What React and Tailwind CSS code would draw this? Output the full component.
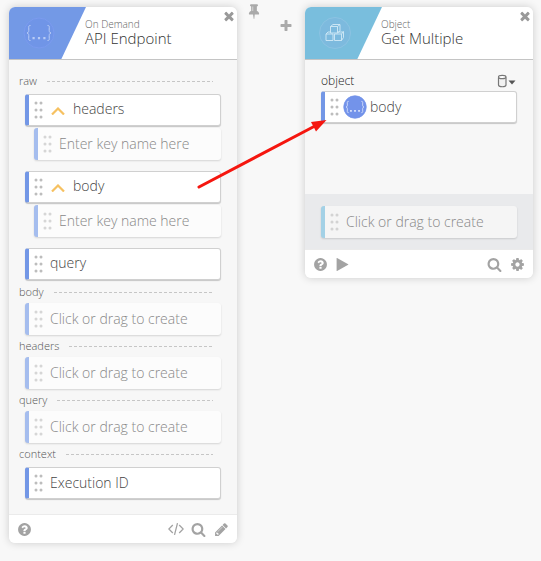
import React from "react";

const PATHS = {
  times:
    "M1490 1322q0 40-28 68l-136 136q-28 28-68 28t-68-28l-294-294-294 294q-28 28-68 28t-68-28l-136-136q-28-28-28-68t28-68l294-294-294-294q-28-28-28-68t28-68l136-136q28-28 68-28t68 28l294 294 294-294q28-28 68-28t68 28l136 136q28 28 28 68t-28 68l-294 294 294 294q28 28 28 68z",
  plus:
    "M1600 736v192q0 40-28 68t-68 28h-416v416q0 40-28 68t-68 28h-192q-40 0-68-28t-28-68v-416h-416q-40 0-68-28t-28-68v-192q0-40 28-68t68-28h416v-416q0-40 28-68t68-28h192q40 0 68 28t28 68v416h416q40 0 68 28t28 68z",
  pin:
    "M800 864v-448q0-14-9-23t-23-9-23 9-9 23v448q0 14 9 23t23 9 23-9 9-23zm672 352q0 26-19 45t-45 19h-429l-51 483q-2 12-10.5 20.5t-20.5 8.5h-1q-27 0-32-27l-76-485h-404q-26 0-45-19t-19-45q0-123 78.5-221.5t177.5-98.5v-512q-52 0-90-38t-38-90 38-90 90-38h640q52 0 90 38t38 90-38 90-90 38v512q99 0 177.5 98.5t78.5 221.5z",
  help:
    "M1024 1376v-192q0-14-9-23t-23-9h-192q-14 0-23 9t-9 23v192q0 14 9 23t23 9h192q14 0 23-9t9-23zm256-672q0-88-55.5-163t-138.5-116-170-41q-243 0-371 213-15 24 8 42l132 100q7 6 19 6 16 0 25-12 53-68 86-92 34-24 86-24 48 0 85.5 26t37.5 59q0 38-20 61t-68 45q-63 28-115.5 86.5t-52.5 125.5v36q0 14 9 23t23 9h192q14 0 23-9t9-23q0-19 21.5-49.5t54.5-49.5q32-18 49-28.5t46-35 44.5-48 28-60.5 12.5-81zm384 192q0 209-103 385.5t-279.5 279.5-385.5 103-385.5-103-279.5-279.5-103-385.5 103-385.5 279.5-279.5 385.5-103 385.5 103 279.5 279.5 103 385.5z",
  search:
    "M1216 832q0-185-131.5-316.500t-316.500-131.500-316.500 131.500-131.500 316.500 131.500 316.500 316.500 131.500 316.500-131.500 131.500-316.500zm512 832q0 52-38 90t-90 38q-54 0-90-38l-343-342q-179 124-399 124-143 0-273.500-55.500t-225-150-150-225-55.500-273.500 55.500-273.500 150-225 225-150 273.500-55.500 273.500 55.500 225 150 150 225 55.500 273.500q0 220-124 399l343 343q37 37 37 90z",
  cog:
    "M1152 896q0-106-75-181t-181-75-181 75-75 181 75 181 181 75 181-75 75-181zm512-109v222q0 12-8 23t-20 13l-185 28q-19 54-39 91 35 50 107 138 10 12 10 25t-9 23q-27 37-99 108t-94 71q-12 0-26-9l-138-108q-44 23-91 38-16 136-29 186-7 28-36 28h-222q-14 0-24.500-8.500t-11.500-21.500l-28-184q-49-16-90-37l-141 107q-10 9-25 9-14 0-25-11-126-114-165-168-7-10-7-23 0-12 8-23 15-21 51-66.500t54-70.500q-27-50-41-99l-183-27q-13-2-21-12.500t-8-23.500v-222q0-12 8-23t19-13l186-28q14-46 39-92-40-57-107-138-10-12-10-24 0-10 9-23 26-36 98.500-107.500t94.500-71.500q13 0 26 10l138 107q44-23 91-38 16-136 29-186 7-28 36-28h222q14 0 24.500 8.500t11.500 21.500l28 184q49 16 90 37l142-107q9-9 24-9 13 0 25 10 129 119 165 170 7 8 7 22 0 12-8 23-15 21-51 66.500t-54 70.500q26 50 41 98l183 28q13 2 21 12.500t8 23.500z",
  pencil:
    "M491 1536l91-91-235-235-91 91v107h128v128h107zm523-928q0-22-22-22-10 0-17 7l-542 542q-7 7-7 17 0 22 22 22 10 0 17-7l542-542q7-7 7-17zm-54-192l416 416-832 832h-416v-416zm683 96q0 53-37 90l-166 166-416-416 166-165q36-38 90-38 53 0 91 38l235 234q37 39 37 91z",
  play:
    "M1576 927l-1328 738q-23 13-39.500 3t-16.500-36v-1472q0-26 16.500-36t39.500 3l1328 738q23 13 23 31t-23 31z",
};

function Icon({ name, className = "size-[15px]" }) {
  return (
    <svg viewBox="0 0 1792 1792" fill="currentColor" className={`shrink-0 ${className}`} aria-hidden="true">
      <path d={PATHS[name]} />
    </svg>
  );
}

function CodeIcon() {
  return (
    <svg viewBox="0 0 16 16" fill="none" stroke="currentColor" strokeWidth="1.3" className="size-4 shrink-0" aria-hidden="true">
      <path d="M4.800 4 .8 8l4 4M11.200 4l4 4-4 4M9.500 2.200l-3 11.600" />
    </svg>
  );
}

function Braces({ className, fill, stroke, brace }) {
  return (
    <svg viewBox="0 0 32 32" fill="none" className={`shrink-0 ${className}`} aria-hidden="true">
      <circle cx="16" cy="16" r="15" fill={fill} stroke={stroke} />
      <path
        d="M7.500 8.500C5 8.500 5.800 10 5.800 12c0 2 .2 3.500-1.800 4 2 .5 1.800 2 1.800 4 0 2-.8 3.500 1.700 3.500M24.500 8.500c2.500 0 1.700 1.500 1.700 3.500 0 2-.2 3.500 1.800 4-2 .5-1.800 2-1.800 4 0 2 .8 3.500-1.700 3.500"
        stroke={brace}
        strokeWidth="1"
      />
      <path d="M9.500 20h2.200v2.200H9.500zM14.900 20h2.200v2.200h-2.200zM20.300 20h2.200v2.200h-2.200z" fill={brace} />
    </svg>
  );
}

function Cubes() {
  return (
    <svg viewBox="0 0 32 32" fill="none" className="size-8 shrink-0" aria-hidden="true">
      <circle cx="16" cy="16" r="15.500" fill="#7dbade" stroke="#8cc3e2" />
      <g stroke="#d3eaf6" strokeWidth="0.900" strokeLinejoin="round">
        <path d="M7 17h7v6.500H7zM15.500 17h7v6.500h-7zM11.500 9.500h7v6.500h-7z" />
        <path d="M11.500 9.500 14 7.500h7l-2.500 2M21 7.500V14l-2.500 2M7 17l2-2h2.500M22.500 17l2-2.500v6l-2 3M18.500 15H24" />
      </g>
    </svg>
  );
}

function Dots() {
  return (
    <svg viewBox="0 0 10 18" className="h-[18px] w-2.5 shrink-0 fill-[#bdbdbd]" aria-hidden="true">
      {[2, 9, 16].map((y) => (
        <g key={y}>
          <circle cx="2" cy={y} r="1.500" />
          <circle cx="7" cy={y} r="1.500" />
        </g>
      ))}
    </svg>
  );
}

function IconButton({ label, children }) {
  return (
    <button type="button" aria-label={label} className="flex size-[15px] items-center justify-center">
      {children}
    </button>
  );
}

function Card({ kind, title, color, icon, footerLeft, footerRight, children }) {
  return (
    <section className="min-w-0 flex-1 overflow-hidden rounded-md bg-[#f7f7f7] shadow-[0_0_8px_rgba(0,0,0,0.18)]">
      <header className="flex h-[53px] border-b border-[#c4c4c4] bg-white">
        <div
          className={`flex w-[77px] shrink-0 items-center pl-3.5 [clip-path:polygon(0_0,100%_0,68%_100%,0_100%)] ${color}`}
        >
          {icon}
        </div>
        <div className="-ml-px min-w-0 flex-1 pt-2.5">
          <p className="text-[10px] leading-[14px] font-light text-[#666]">{kind}</p>
          <h2 className="text-[15px] leading-[14px] font-light text-[#333]">{title}</h2>
        </div>
        <button type="button" aria-label="Close" className="mt-px flex size-4 items-center justify-center text-[#999]">
          <Icon name="times" className="size-3.5" />
        </button>
      </header>
      {children}
      <footer className="flex h-[29px] items-center justify-between border-t border-[#ebebeb] bg-white px-2 text-[#a3a3a3]">
        <div className="flex gap-[7px]">{footerLeft}</div>
        <div className="flex gap-2">{footerRight}</div>
      </footer>
    </section>
  );
}

function SectionLabel({ children }) {
  return (
    <div className="flex h-[22px] items-center gap-2.5 pr-6 pl-2.5">
      <h3 className="text-[11px] leading-4 font-light text-[#555]">{children}</h3>
      <span className="h-px flex-1 bg-[repeating-linear-gradient(90deg,#c6c6c6_0_3px,transparent_3px_5px)]" />
    </div>
  );
}

function Field({ children }) {
  return (
    <div className="mx-4 mt-0.5 flex h-8 items-center rounded-[3px] border border-l-4 border-[#d0d0d0] border-l-[#7397e6] bg-white pl-[5px] text-sm font-light text-[#444] shadow-[0_1px_1px_rgba(0,0,0,0.2)]">
      <Dots />
      {children}
    </div>
  );
}

function Expandable({ name }) {
  return (
    <Field>
      <button type="button" className="ml-[7px] flex items-center gap-2 pb-0.5">
        <svg viewBox="0 0 14 8" fill="none" className="mt-1 h-2 w-3.5" aria-hidden="true">
          <path d="m1 7.500 6-6 6 6" stroke="#f6c161" strokeWidth="2.200" />
        </svg>
        {name}
      </button>
    </Field>
  );
}

function KeyInput({ label }) {
  return (
    <div className="mt-0.5 mr-4 ml-[25px] flex h-8 items-center rounded-[3px] border-l-4 border-[#a5bdee] bg-[#fcfcfc] pl-[5px] shadow-[0_1px_2px_rgba(0,0,0,0.14)]">
      <span className="flex opacity-60">
        <Dots />
      </span>
      <input
        type="text"
        aria-label={label}
        placeholder="Enter key name here"
        className="ml-1.5 w-full min-w-0 bg-transparent text-sm font-light text-[#444] outline-none placeholder:text-[#888]"
      />
    </div>
  );
}

function CreateButton({ color = "border-[#a5bdee] bg-[#fcfcfc]" }) {
  return (
    <div className="px-4">
      <button
        type="button"
        className={`flex h-8 w-full items-center gap-1.5 rounded-[3px] border-l-4 pl-[5px] text-sm font-light text-[#888] shadow-[0_1px_2px_rgba(0,0,0,0.14)] ${color}`}
      >
        <span className="flex opacity-60">
          <Dots />
        </span>
        Click or drag to create
      </button>
    </div>
  );
}

export default function App() {
  return (
    <main className="relative flex min-h-screen items-start bg-[#f8f8f8] py-[7px] pr-2 pl-[9px] font-['Open_Sans','Noto_Sans',sans-serif]">
      <Card
        kind="On Demand"
        title="API Endpoint"
        color="bg-[#7399e6]"
        icon={<Braces className="size-8" fill="#7095e7" stroke="#7b9bee" brace="#b9ccf5" />}
        footerLeft={
          <IconButton label="Help">
            <Icon name="help" />
          </IconButton>
        }
        footerRight={
          <>
            <IconButton label="Code">
              <CodeIcon />
            </IconButton>
            <IconButton label="Search">
              <Icon name="search" />
            </IconButton>
            <IconButton label="Edit">
              <Icon name="pencil" />
            </IconButton>
          </>
        }
      >
        <div className="pt-2.5 pb-[15px]">
          <div className="pb-px">
            <SectionLabel>raw</SectionLabel>
            <div className="flex flex-col gap-[9px]">
              <div>
                <Expandable name="headers" />
                <KeyInput label="New header key" />
              </div>
              <div>
                <Expandable name="body" />
                <KeyInput label="New body key" />
              </div>
              <Field>
                <span className="ml-1.5 pb-0.5">query</span>
              </Field>
            </div>
          </div>
          <SectionLabel>body</SectionLabel>
          <CreateButton />
          <SectionLabel>headers</SectionLabel>
          <CreateButton />
          <SectionLabel>query</SectionLabel>
          <CreateButton />
          <SectionLabel>context</SectionLabel>
          <Field>
            <span className="ml-1.5">Execution ID</span>
          </Field>
        </div>
      </Card>

      <div className="flex w-[68px] shrink-0 justify-between pr-3 pl-[9px] text-[#aaa]">
        <button type="button" aria-label="Pin" className="-mt-1 self-start">
          <Icon name="pin" className="size-4" />
        </button>
        <button type="button" aria-label="Add" className="mt-3">
          <Icon name="plus" className="size-3.5" />
        </button>
      </div>

      <Card
        kind="Object"
        title="Get Multiple"
        color="bg-[#79bedd]"
        icon={<Cubes />}
        footerLeft={
          <>
            <IconButton label="Help">
              <Icon name="help" />
            </IconButton>
            <IconButton label="Run">
              <Icon name="play" />
            </IconButton>
          </>
        }
        footerRight={
          <>
            <IconButton label="Search">
              <Icon name="search" />
            </IconButton>
            <IconButton label="Settings">
              <Icon name="cog" />
            </IconButton>
          </>
        }
      >
        <div className="h-[134px] pt-[13px]">
          <div className="flex h-4 items-center justify-between px-4 text-[#222]">
            <h3 className="text-xs leading-4 font-light">object</h3>
            <button type="button" aria-label="Choose source" className="flex items-center">
              <svg viewBox="0 0 20 14" className="h-3.5 w-5" aria-hidden="true">
                <path d="M1.500 3.500v7.500c0 2.300 7.500 2.300 7.500 0V3.500" fill="#f1f1f1" stroke="#777" strokeWidth="1.200" />
                <ellipse cx="5.250" cy="3" rx="3.750" ry="1.700" fill="#fff" stroke="#777" strokeWidth="1.200" />
                <path d="M11.500 6.500h7l-3.500 4z" fill="#555" />
              </svg>
            </button>
          </div>
          <Field>
            <Braces className="ml-[3px] size-6" fill="#7393ea" stroke="#7393ea" brace="#e3eafc" />
            <span className="ml-[3px]">body</span>
          </Field>
        </div>
        <div className="bg-[#e9eaec] pt-3 pb-[11px]">
          <CreateButton color="border-[#a3d1e6] bg-[#f5f5f5]" />
        </div>
      </Card>

      <svg
        viewBox="0 0 132 72"
        className="pointer-events-none absolute top-[118px] left-[196px] h-[72px] w-[132px]"
        aria-hidden="true"
      >
        <path d="M3 69 118 8.500" stroke="#f5160f" strokeWidth="3" strokeLinecap="round" />
        <path d="M130.500 2 120 13.500l-5-9.500z" fill="#f5160f" />
      </svg>
    </main>
  );
}
